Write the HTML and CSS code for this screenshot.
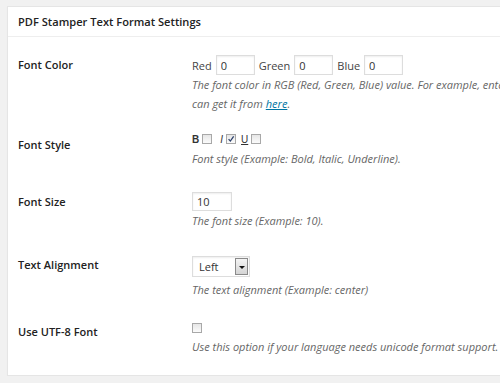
FILE: index.html
```html
<!DOCTYPE html>
<html lang="en">
<head>
  <meta charset="UTF-8" />
  <title>PDF Stamper Settings</title>
  <link rel="stylesheet" href="styles.css">
</head>
<body>

  <div class="postbox">
    <h3 class="postbox-title">PDF Stamper Text Format Settings</h3>

    <div class="inside">
      <!-- Font color -->
      <div class="row row-color">
        <div class="row-label">Font Color</div>
        <div class="row-field">
          <div class="rgb-line">
            <span>Red</span><input class="text-input rgb-input" type="text" value="0">
            <span>Green</span><input class="text-input rgb-input" type="text" value="0">
            <span>Blue</span><input class="text-input rgb-input" type="text" value="0">
          </div>
          <p class="description">The font color in RGB (Red, Green, Blue) value. For example, enter 0, 0, 0 for black. You<br>can get it from <a href="#">here</a>.</p>
        </div>
      </div>

      <!-- Font style -->
      <div class="row row-style">
        <div class="row-label">Font Style</div>
        <div class="row-field">
          <div class="check-line">
            <span class="style-letter letter-b">B</span><span class="checkbox"></span>
            <span class="style-letter letter-i">I</span><span class="checkbox checked">
              <svg viewBox="0 0 10 10" width="10" height="10"><path d="M2 5.2 L4.2 7.6 L8.3 1.8" fill="none" stroke="#2a3f6b" stroke-width="1.6"/></svg>
            </span>
            <span class="style-letter letter-u">U</span><span class="checkbox"></span>
          </div>
          <p class="description">Font style (Example: Bold, Italic, Underline).</p>
        </div>
      </div>

      <!-- Font size -->
      <div class="row row-size">
        <div class="row-label">Font Size</div>
        <div class="row-field">
          <input class="text-input size-input" type="text" value="10">
          <p class="description">The font size (Example: 10).</p>
        </div>
      </div>

      <!-- Alignment -->
      <div class="row row-align">
        <div class="row-label">Text Alignment</div>
        <div class="row-field">
          <div class="select">
            <span class="select-value">Left</span>
            <span class="select-btn"></span>
          </div>
          <p class="description">The text alignment (Example: center)</p>
        </div>
      </div>

      <!-- UTF-8 -->
      <div class="row row-utf">
        <div class="row-label">Use UTF-8 Font</div>
        <div class="row-field">
          <div class="check-line"><span class="checkbox"></span></div>
          <p class="description">Use this option if your language needs unicode format support.</p>
        </div>
      </div>
    </div>
  </div>

</body>
</html>
```

FILE: styles.css
```css
* {
  box-sizing: border-box;
}

html, body {
  overflow: hidden;
}

body {
  margin: 0;
  background: #f1f1f1;
  color: #444;
  font-family: 'Open Sans', 'Noto Sans', sans-serif;
  font-size: 11px;
}

.postbox {
  margin: 6px 0 0 7px;
  width: 760px;
  background: #fff;
  border: 1px solid #e5e5e5;
  box-shadow: 0 1px 1px rgba(0, 0, 0, 0.04);
}

.postbox-title {
  margin: 0;
  height: 30px;
  padding: 0 10px;
  line-height: 29px;
  font-size: 11.1px;
  font-weight: 600;
  color: #222;
  border-bottom: 1px solid #eee;
}

.inside {
  padding: 18px 0 19px 10px;
}

.row {
  display: flex;
}

.row-label {
  flex: none;
  width: 174px;
  padding-top: 1px;
  line-height: 18px;
  font-size: 11px;
  font-weight: 600;
  color: #222;
}

.row-field {
  flex: 1;
}

.description {
  margin: 0;
  line-height: 19px;
  font-size: 11px;
  font-style: italic;
  color: #666;
}

.description a {
  color: #0074a2;
}

/* inputs */
.text-input {
  display: block;
  height: 20px;
  padding: 0 4px;
  border: 1px solid #ddd;
  box-shadow: inset 0 1px 2px rgba(0, 0, 0, 0.07);
  font-family: inherit;
  font-size: 11px;
  color: #333;
  outline: none;
}

.rgb-line {
  display: flex;
  align-items: center;
  height: 20px;
}

.rgb-input {
  width: 39px;
  margin: 0 4px 0 4px;
}

.size-input {
  width: 40px;
  height: 19px;
}

/* checkboxes */
.check-line {
  display: flex;
  align-items: center;
  height: 16px;
}

.checkbox {
  display: inline-flex;
  width: 10px;
  height: 10px;
  border: 1px solid #a8a8a8;
  background: linear-gradient(#e6e6e6, #fbfbfb);
}

.checkbox svg {
  margin: -1px 0 0 0;
}

.style-letter {
  font-family: 'Liberation Sans', Arial, sans-serif;
  font-size: 10px;
  color: #333;
  margin-right: 3px;
}

.letter-b {
  font-weight: bold;
}

.letter-i {
  font-style: italic;
  margin-left: 8px;
  margin-right: 3px;
}

.letter-u {
  text-decoration: underline;
  margin-left: 5px;
}

/* select */
.select {
  display: flex;
  align-items: center;
  width: 58px;
  height: 21px;
  border: 1px solid #ddd;
  box-shadow: inset 0 1px 2px rgba(0, 0, 0, 0.07);
  padding: 1px;
}

.select-value {
  flex: 1;
  padding-left: 5px;
  font-size: 11px;
  color: #333;
}

.select-btn {
  position: relative;
  width: 13px;
  height: 100%;
  border: 1px solid #8a8a8a;
  background: linear-gradient(#f4f4f4, #d4d4d4);
}

.select-btn::after {
  content: "";
  position: absolute;
  left: 3px;
  top: 7px;
  border-left: 3px solid transparent;
  border-right: 3px solid transparent;
  border-top: 3px solid #111;
}

/* row spacing */
.row-style {
  margin-top: 18px;
}

.row-style .row-label {
  padding-top: 5px;
}

.row-style .description {
  margin-top: 2px;
}

.row-size {
  margin-top: 24px;
}

.row-align {
  margin-top: 26px;
}

.row-align .row-label {
  padding-top: 0;
}

.row-align .description {
  margin-top: 3px;
}

.row-utf {
  margin-top: 21px;
}

.row-utf .row-label {
  padding-top: 3px;
}

.row-utf .description {
  margin-top: 1px;
}
```
